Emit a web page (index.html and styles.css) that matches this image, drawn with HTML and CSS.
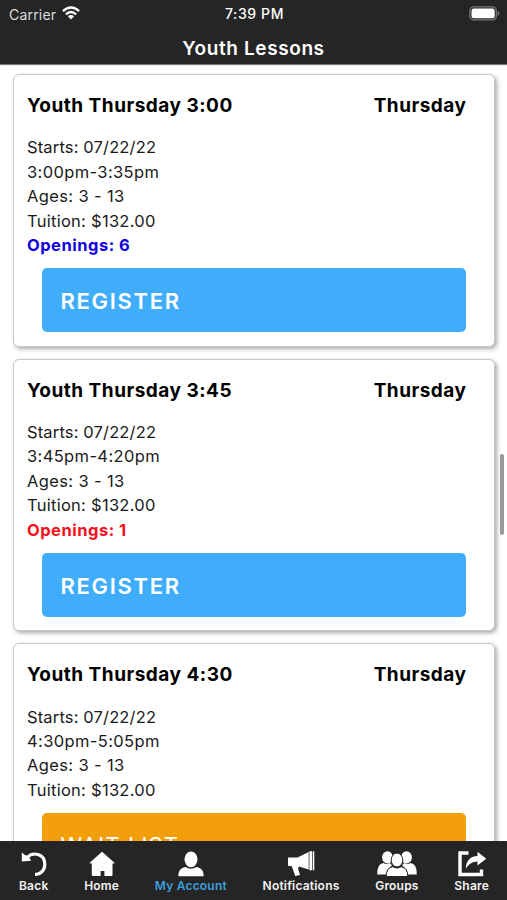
FILE: index.html
```html
<!DOCTYPE html>
<html lang="en">
<head>
<meta charset="utf-8">
<title>Youth Lessons</title>
<link rel="stylesheet" href="styles.css">
</head>
<body>
<div class="app">
  <header class="header">
    <div class="status">
      <div class="carrier"><span>Carrier</span>
        <svg class="wifi" viewBox="0 0 18 14"><g fill="none" stroke="#fff" stroke-width="2.3"><path d="M.9 5.2Q9-2.2 17.1 5.2"/><path d="M3.9 8.3Q9 3.6 14.1 8.3"/></g><path fill="#fff" d="M5.9 10.2Q9 7.6 12.1 10.2L9 13.6Z"/></svg>
      </div>
      <div class="clock">7:39 PM</div>
      <svg class="battery" viewBox="0 0 31 15"><rect x=".9" y=".9" width="26.4" height="13" rx="3.8" fill="#252525" stroke="#777" stroke-width="1.3"/><rect x="2.5" y="2.5" width="23.2" height="9.8" rx="2.2" fill="#fff"/><path d="M28.6 5q1.8.9 1.8 2.4t-1.8 2.4z" fill="#777"/></svg>
    </div>
    <h1 class="heading">Youth Lessons</h1>
  </header>
  <main class="list">
    <section class="card">
      <div class="card-head"><h2>Youth Thursday 3:00</h2><h2 class="day">Thursday</h2></div>
      <div class="details">
        <p class="starts">Starts: 07/22/22</p><p class="time">3:00pm-3:35pm</p><p class="ages">Ages: 3 - 13</p><p class="tuition">Tuition: $132.00</p>
        <p class="openings">Openings: 6</p>
      </div>
      <div class="button">REGISTER</div>
    </section>
    <section class="card">
      <div class="card-head"><h2>Youth Thursday 3:45</h2><h2 class="day">Thursday</h2></div>
      <div class="details">
        <p class="starts">Starts: 07/22/22</p><p class="time">3:45pm-4:20pm</p><p class="ages">Ages: 3 - 13</p><p class="tuition">Tuition: $132.00</p>
        <p class="openings low">Openings: 1</p>
      </div>
      <div class="button">REGISTER</div>
    </section>
    <section class="card">
      <div class="card-head"><h2>Youth Thursday 4:30</h2><h2 class="day">Thursday</h2></div>
      <div class="details">
        <p class="starts">Starts: 07/22/22</p><p class="time">4:30pm-5:05pm</p><p class="ages">Ages: 3 - 13</p><p class="tuition">Tuition: $132.00</p>
      </div>
      <div class="button wait">WAIT LIST</div>
    </section>
    <div class="scrollbar"></div>
  </main>
  <nav class="tabs">
    <div class="tab"><svg width="26" height="26" viewBox="0 0 26 26"><path d="M6 6.800C11.500 .2 23.800 2.500 23.800 13.200C23.800 19.500 19.500 23.500 14 23.500" fill="none" stroke="#fff" stroke-width="3.200"/><path d="M.8 1.200L3.500 3.800L8 5.600L10 9.800L.8 10.500Z" fill="#fff"/></svg><span>Back</span></div>
    <div class="tab"><svg width="26" height="26" viewBox="0 0 26 26"><path d="M13 .7L26 12.2L23.5 12.4V24Q23.5 25 22.5 25H15.4V20H11.6V25H4Q2.8 25 2.8 24V12.4L.2 12.2Z" fill="#fff"/></svg><span>Home</span></div>
    <div class="tab active"><svg width="26" height="26" viewBox="0 0 26 26"><ellipse cx="13" cy="8.3" rx="6.5" ry="7.9" fill="#fff"/><path d="M7.5 16Q13 19.3 18.5 16Q24.2 17 25.2 21.5L25.7 24Q25.8 25.2 24.6 25.2H1.4Q.2 25.2.3 24L.8 21.5Q1.8 17 7.5 16Z" fill="#fff"/></svg><span>My Account</span></div>
    <div class="tab"><svg width="28" height="26" viewBox="0 0 28 26"><path d="M1 6.500H10.500L21.700 1V18.500L12 15.600L11 17.500L13 24L8.200 25L4.800 15.200L1 14.800Z M22.400.2H25.200V19.300H22.400Z M25.900.2H27.300V19.300H25.900Z" fill="#fff"/></svg><span>Notifications</span></div>
    <div class="tab"><svg width="40" height="26" viewBox="0 0 40 26" fill="#fff"><ellipse cx="10.500" cy="6.400" rx="5.400" ry="6.200"/><ellipse cx="29.500" cy="6.400" rx="5.400" ry="6.200"/><path d="M6.500 12Q9 13.800 13 12L15 14.500Q9.500 18 9.200 23.500H.3Q0 12.500 6.500 12ZM33.500 12Q31 13.800 27 12L25 14.500Q30.500 18 30.800 23.500H39.700Q40 12.500 33.500 12Z"/><g stroke="#252525" stroke-width="1"><ellipse cx="20" cy="9" rx="5.800" ry="6.900"/><path d="M15.500 15.700Q20 18.500 24.500 15.700Q30.800 17 30.800 25.500H9.200Q9.200 17 15.500 15.700Z"/></g></svg><span>Groups</span></div>
    <div class="tab"><svg width="30" height="26" viewBox="0 0 30 26"><path d="M11.500 2H3V23.500H24.500V18.500" fill="none" stroke="#fff" stroke-width="3.400"/><path d="M8.800 17.800C9 9 14 5.200 20.500 5V.8L29.200 7.700L20.500 14.500V10.500C15.500 10.700 12 12.500 8.800 17.800Z" fill="#fff"/></svg><span>Share</span></div>
  </nav>
</div>
</body>
</html>
```
FILE: styles.css
```css
* { box-sizing: border-box; margin: 0; }
body { background: #fff; font-family: Inter, "Liberation Sans", sans-serif; color: #1a1a1a; }
.app { height: 900px; display: flex; flex-direction: column; overflow: hidden; }
.header { height: 64px; flex: none; background: #252525; color: #fff; box-shadow: 0 1px 1px #777; }
.status { height: 28px; display: grid; grid-template-columns: 1fr auto 1fr; align-items: center; padding: 0 7px 0 9px; }
.carrier { display: flex; align-items: center; gap: 6px; font-size: 14px; letter-spacing: 0.2px; color: #ddd; }
.wifi { width: 18px; height: 14px; margin-bottom: 2px; }
.clock { font-size: 14px; font-weight: 500; letter-spacing: 0.6px; padding-bottom: 1px; }
.battery { width: 31px; height: 15px; justify-self: end; margin-bottom: 1px; }
.heading { font-size: 19px; line-height: 24px; font-weight: 600; letter-spacing: 0.6px; text-align: center; padding-top: 9px; }
.list { position: relative; flex: 1; min-height: 0; overflow: hidden; padding: 10px 12px 0 13px; }
.card { height: 272.500px; margin-bottom: 12.200px; padding: 19px 27.500px 0 13px; border: 1px solid #c8c8c8; border-radius: 6px; background: #fff; box-shadow: 2px 2px 4px #aaa; }
.card-head { display: flex; justify-content: space-between; color: #000; }
.card-head h2 { font-size: 19px; line-height: 24px; font-weight: 650; letter-spacing: 0.5px; white-space: nowrap; }
.details { padding-top: 17.300px; font-size: 16.500px; line-height: 24.400px; letter-spacing: 0.37px; }
.starts { letter-spacing: 0.15px; }
.tuition { letter-spacing: 0.27px; }
.openings { color: #1100e0; font-weight: 700; letter-spacing: 0.5px; }
.openings.low { color: #f5101c; }
.button { height: 64.500px; margin: 10.500px 1px 0 15px; padding-left: 18.500px; border-radius: 5px; background: #40adfb; color: #fff; font-size: 22px; line-height: 66px; font-weight: 600; letter-spacing: 1.700px; }
.button.wait { background: #f29f0b; font-weight: 400; letter-spacing: 1.100px; line-height: 64px; }
.scrollbar { position: absolute; right: 3px; top: 390px; width: 4px; height: 81px; border-radius: 2px; background: #999; }
.tabs { height: 59px; flex: none; display: flex; justify-content: space-between; padding: 10px 18px 0 19px; background: #252525; color: #f4f4f4; }
.tab { display: flex; flex-direction: column; align-items: center; font-size: 12px; line-height: 17px; font-weight: 600; letter-spacing: 0.2px; }
.tab span { white-space: nowrap; }
.tab.active span { color: #3d9fdf; }
```
